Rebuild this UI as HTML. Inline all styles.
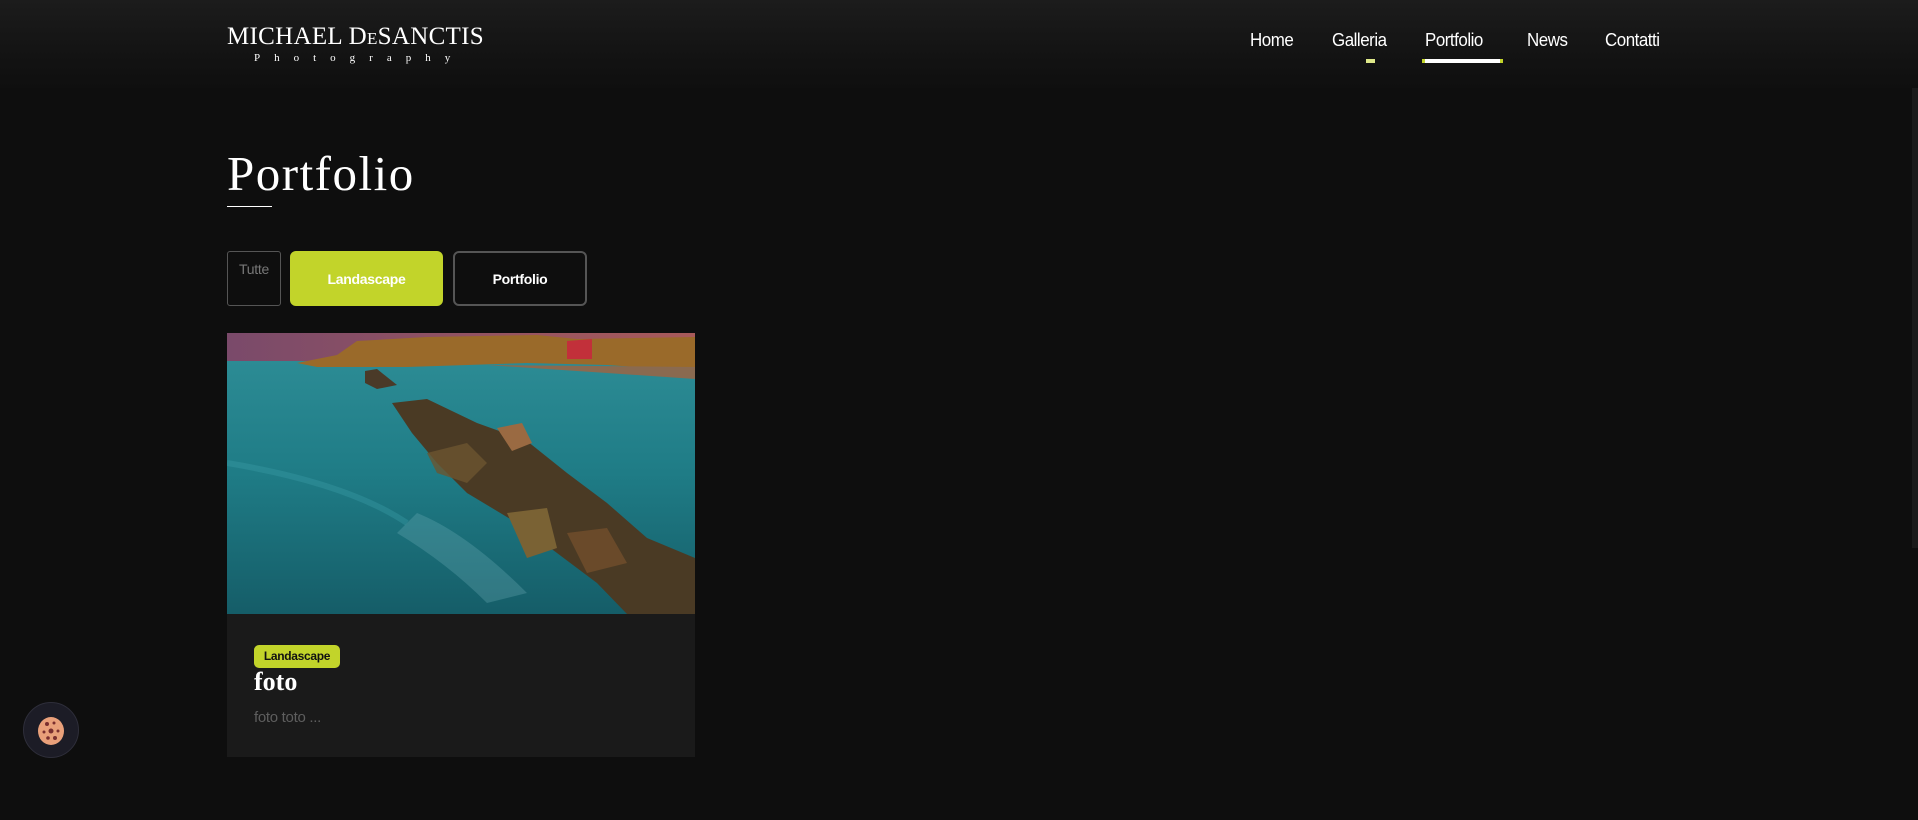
<!DOCTYPE html>
<html><head><meta charset="utf-8">
<style>
*{margin:0;padding:0;box-sizing:border-box}
html,body{width:1918px;height:820px;overflow:hidden;background:#0e0e0e;font-family:"Liberation Sans",sans-serif;color:#fff}
.header{position:absolute;left:0;top:0;width:1918px;height:88px;background:linear-gradient(#1c1c1c,#141414 55%,#0f0f0f)}
.logo{position:absolute;left:227px;top:24px;font-family:"Liberation Serif",serif;color:#fff}
.logo .t{font-size:25px;letter-spacing:0.3px;line-height:26px;white-space:nowrap}
.logo .t small{font-size:17px}
.logo .s{font-size:11px;letter-spacing:14px;margin-left:27px;line-height:12px;margin-top:0px}
.nav{position:absolute;top:30px;font-size:18px;color:#fff;letter-spacing:-0.5px;transform:scaleX(.94);transform-origin:left}
.bar{position:absolute;height:4px;background:#fff}
h1{position:absolute;left:227px;top:144px;font-family:"Liberation Serif",serif;font-weight:normal;font-size:49px;letter-spacing:1.5px;line-height:60px}
.uline{position:absolute;left:227px;top:206px;width:45px;height:1px;background:#fff}
.btn{position:absolute;top:251px;height:55px;border-radius:6px;font-size:14px;font-weight:bold;display:flex;align-items:center;justify-content:center;letter-spacing:-0.3px}
.card{position:absolute;left:227px;top:333px;width:468px;height:424px;background:#1a1a1a}
.badge{position:absolute;left:27px;top:312px;width:86px;height:23px;background:#c2d42a;border-radius:5px;color:#111;font-size:12px;font-weight:bold;text-align:center;line-height:23px;letter-spacing:-0.3px}
.ft{position:absolute;left:27px;top:334px;font-family:"Liberation Serif",serif;font-weight:bold;font-size:26px}
.desc{position:absolute;left:27px;top:376px;font-size:15px;color:#5e5e5e;letter-spacing:-0.3px}
.cookie{position:absolute;left:23px;top:702px;width:56px;height:56px;border-radius:50%;background:#1c1c26;border:1px solid #2e2e3a}
</style></head><body>
<div class="header"></div>
<div class="logo"><div class="t">MICHAEL D<small>E</small>SANCTIS</div><div class="s">Photography</div></div>
<div class="nav" style="left:1250px">Home</div>
<div class="nav" style="left:1332px">Galleria</div>
<div class="nav" style="left:1425px">Portfolio</div>
<div class="nav" style="left:1527px">News</div>
<div class="nav" style="left:1605px">Contatti</div>
<div class="bar" style="left:1366px;top:59px;width:9px;background:#dfe98a"></div>
<div class="bar" style="left:1422px;top:59px;width:81px"></div>
<div class="bar" style="left:1422px;top:59px;width:3px;background:#c2d42a"></div>
<div class="bar" style="left:1500px;top:59px;width:3px;background:#c2d42a"></div>

<h1>Portfolio</h1>
<div class="uline"></div>

<div class="btn" style="left:227px;width:54px;border:1px solid #555;border-radius:3px;font-weight:normal;color:#777;font-size:14px;align-items:flex-start;padding-top:9px">Tutte</div>
<div class="btn" style="left:290px;width:153px;background:#c2d42a;color:#fff">Landascape</div>
<div class="btn" style="left:453px;width:134px;border:2px solid #555;color:#fff">Portfolio</div>

<div class="card">
<svg width="468" height="281" viewBox="0 0 468 281" style="display:block">
<defs>
<linearGradient id="sky" x1="0" y1="0" x2="1" y2="0"><stop offset="0" stop-color="#7a4a6a"/><stop offset="1" stop-color="#a85a5a"/></linearGradient>
<linearGradient id="sea" x1="0" y1="0" x2="0" y2="1"><stop offset="0" stop-color="#2f8f98"/><stop offset=".5" stop-color="#1f7c86"/><stop offset="1" stop-color="#155d68"/></linearGradient>
</defs>
<rect width="468" height="281" fill="url(#sea)"/>
<rect width="468" height="28" fill="url(#sky)"/>
<path d="M70 30 L110 22 L130 8 L200 4 L310 2 L350 6 L468 4 L468 38 L380 32 L300 30 L180 34 L90 34 Z" fill="#9a6a2a"/>
<path d="M340 8 L365 6 L365 26 L340 26 Z" fill="#c2303a"/>
<path d="M260 32 L468 34 L468 46 L380 40 Z" fill="#8a6a50"/>
<path d="M138 38 L150 36 L170 52 L150 56 L138 50 Z" fill="#4a3a28"/>
<path d="M165 70 L200 66 L250 90 L300 108 L340 140 L380 170 L420 205 L468 225 L468 281 L400 281 L370 250 L330 220 L290 190 L240 160 L210 130 L185 100 Z" fill="#4a3a24"/>
<path d="M200 120 L240 110 L260 130 L240 150 L210 140 Z" fill="#6b5530" opacity=".8"/>
<path d="M280 180 L320 175 L330 215 L300 225 Z" fill="#7a6234"/>
<path d="M340 200 L380 195 L400 230 L360 240 Z" fill="#6a4a2a"/>
<path d="M270 95 L295 90 L305 110 L285 118 Z" fill="#9a6a42"/>
<path d="M190 180 Q240 200 300 260 L260 270 Q220 230 170 200 Z" fill="#6fb0b8" opacity=".3"/>
<path d="M0 130 Q120 150 180 190" stroke="#3a9aa4" stroke-width="6" fill="none" opacity=".4"/>
</svg>
<div class="badge">Landascape</div>
<div class="ft">foto</div>
<div class="desc">foto toto ...</div>
</div>

<div class="cookie">
<svg width="56" height="56" viewBox="0 0 56 56">
<ellipse cx="27" cy="28" rx="13" ry="14" fill="#e9a07a"/>
<circle cx="23" cy="21" r="2" fill="#7a2f2f"/><circle cx="30" cy="20" r="1.5" fill="#7a2f2f"/>
<circle cx="27" cy="28" r="2.5" fill="#7a2f2f"/><circle cx="20" cy="29" r="1.5" fill="#7a2f2f"/>
<circle cx="34" cy="28" r="1.5" fill="#7a2f2f"/><circle cx="24" cy="35" r="1.8" fill="#7a2f2f"/>
<circle cx="31" cy="35" r="2" fill="#7a2f2f"/>
</svg>
</div>
<div style="position:absolute;left:1912px;top:88px;width:6px;height:460px;background:#1a1a1a"></div>
</body></html>
